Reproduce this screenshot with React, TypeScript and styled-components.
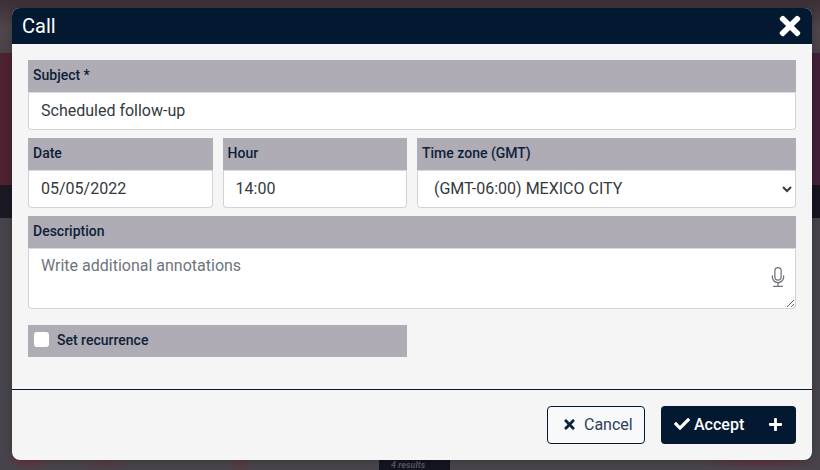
import React from "react";
import styled, { createGlobalStyle } from "styled-components";
import { FaTimes, FaCheck, FaPlus } from "react-icons/fa";
import { BsMic } from "react-icons/bs";

const Global = createGlobalStyle`
  html, body { margin: 0; padding: 0; height: 470px; overflow: hidden; }
  * { box-sizing: border-box; }
  body { font-family: Roboto, "Liberation Sans", sans-serif; }
`;

const Backdrop = styled.div`
  position: relative;
  width: 820px;
  height: 470px;
  padding: 8px 8px 10px 12px;
  background:
    radial-gradient(ellipse 26px 8px at 30px 462px, rgba(120, 40, 50, 0.55), transparent),
    radial-gradient(ellipse 30px 6px at 105px 464px, rgba(110, 40, 50, 0.4), transparent),
    radial-gradient(ellipse 14px 8px at 240px 464px, rgba(110, 40, 50, 0.45), transparent),
    radial-gradient(ellipse 70px 6px at 760px 463px, rgba(110, 35, 50, 0.55), transparent),
    linear-gradient(90deg, #4e2230 0%, #42203a 100%) 0 53px / 100% 132px no-repeat,
    linear-gradient(90deg, #1b1924, #16141f) 0 185px / 100% 33px no-repeat,
    linear-gradient(180deg, #3c2f37 0px, #443a40 14px, #4d464b 28px, #4a4248 53px) 0 0 / 100% 53px no-repeat,
    #47434a;
`;

const GhostResults = styled.div`
  position: absolute;
  left: 379px;
  top: 460px;
  width: 71px;
  height: 10px;
  padding-left: 12px;
  background: #14141f;
  color: #55535f;
  font-size: 9px;
  line-height: 10px;
  font-style: italic;
  font-weight: 700;
  white-space: nowrap;
  filter: blur(0.6px);
`;

const Modal = styled.section`
  position: relative;
  z-index: 1;
  width: 800px;
  height: 452px;
  display: flex;
  flex-direction: column;
  background: #f5f5f5;
  border-radius: 8px;
  overflow: hidden;
  box-shadow: 0 0 6px rgba(0, 0, 0, 0.25);
`;

const Header = styled.header`
  flex: none;
  height: 36px;
  padding: 0 10px;
  display: flex;
  align-items: center;
  justify-content: space-between;
  background: #031931;
  color: #fff;
`;

const Title = styled.h1`
  margin: 0;
  font-size: 20px;
  font-weight: 400;
  line-height: 36px;
`;

const CloseButton = styled.button`
  border: 0;
  padding: 0;
  width: 24px;
  height: 30px;
  display: flex;
  align-items: center;
  justify-content: center;
  background: none;
  color: #fff;
  font-size: 30px;
`;

const Body = styled.div`
  flex: none;
  height: 346px;
  padding: 16px 16px 0;
  display: flex;
  flex-direction: column;
  gap: 8px;
  border-bottom: 1px solid #031931;
`;

const Row = styled.div`
  display: grid;
  grid-template-columns: 184.6px 184.4px 379px;
  gap: 10px;
`;

const Field = styled.label`
  display: flex;
  flex-direction: column;
`;

const Caption = styled.span`
  height: 32px;
  padding: 0 5px 2px;
  display: flex;
  align-items: center;
  background: #afacb6;
  color: #0d2238;
  font-size: 14px;
  font-weight: 500;
`;

const controlStyles = `
  width: 100%;
  border: 1px solid #ced4da;
  border-top-color: #d8dbe0;
  border-radius: 0 0 4px 4px;
  background: #fff;
  color: #343a40;
  font-family: Roboto, "Liberation Sans", sans-serif;
  font-size: 16px;
  outline: none;
`;

const TextInput = styled.input`
  ${controlStyles}
  height: 38px;
  padding: 0 12px 2px;
`;

const Select = styled.select`
  ${controlStyles}
  height: 38px;
  padding: 0 8px 2px 12px;
`;

const TextAreaWrap = styled.div`
  position: relative;
  height: 61px;
`;

const TextArea = styled.textarea`
  ${controlStyles}
  display: block;
  height: 61px;
  padding: 7px 12px;
  resize: vertical;
  &::placeholder { color: #6c757d; opacity: 1; }
`;

const MicIcon = styled(BsMic)`
  position: absolute;
  right: 8px;
  top: 19px;
  width: 20px;
  height: 20px;
  color: #6f7377;
`;

const RecurrenceRow = styled.label`
  width: 379px;
  height: 32px;
  margin-top: 8px;
  padding: 0 6px 2px;
  display: flex;
  align-items: center;
  gap: 8px;
  background: #afacb6;
  color: #0d2238;
  font-size: 14px;
  font-weight: 500;
`;

const CheckBox = styled.span`
  width: 15px;
  height: 15px;
  border-radius: 3px;
  background: #fff;
  margin-top: -1px;
`;

const Footer = styled.footer`
  flex: 1;
  padding: 16px 16px 0;
  display: flex;
  justify-content: flex-end;
  align-items: flex-start;
  gap: 16px;
`;

const CancelButton = styled.button`
  width: 98px;
  height: 38px;
  padding: 0 0 2px 14px;
  display: flex;
  align-items: center;
  gap: 7px;
  border: 1px solid #031931;
  border-radius: 4px;
  background: #f7f9fb;
  color: #2f4055;
  font-family: inherit;
  font-size: 16px;
  svg { width: 15px; height: 15px; color: #0d2238; }
`;

const AcceptButton = styled.button`
  width: 135px;
  height: 38px;
  padding: 0 13px 2px;
  display: flex;
  align-items: center;
  gap: 4px;
  border: 0;
  border-radius: 4px;
  background: #031931;
  color: #fff;
  font-family: inherit;
  font-size: 16px;
  font-weight: 500;
  svg { width: 16px; height: 16px; }
`;

const AcceptPlus = styled.span`
  margin-left: auto;
  display: flex;
  svg { width: 15px; height: 15px; }
`;

export default function App() {
  return (
    <Backdrop>
      <Global />
      <GhostResults>4 results</GhostResults>
      <Modal>
        <Header>
          <Title>Call</Title>
          <CloseButton aria-label="Close"><FaTimes /></CloseButton>
        </Header>
        <Body>
          <Field>
            <Caption>Subject *</Caption>
            <TextInput defaultValue="Scheduled follow-up" />
          </Field>
          <Row>
            <Field>
              <Caption>Date</Caption>
              <TextInput defaultValue="05/05/2022" />
            </Field>
            <Field>
              <Caption>Hour</Caption>
              <TextInput defaultValue="14:00" />
            </Field>
            <Field>
              <Caption>Time zone (GMT)</Caption>
              <Select defaultValue="mx">
                <option value="mx">(GMT-06:00) MEXICO CITY</option>
              </Select>
            </Field>
          </Row>
          <Field>
            <Caption>Description</Caption>
            <TextAreaWrap>
              <TextArea placeholder="Write additional annotations" />
              <MicIcon />
            </TextAreaWrap>
          </Field>
          <RecurrenceRow>
            <CheckBox />
            Set recurrence
          </RecurrenceRow>
        </Body>
        <Footer>
          <CancelButton><FaTimes />Cancel</CancelButton>
          <AcceptButton>
            <FaCheck />Accept
            <AcceptPlus><FaPlus /></AcceptPlus>
          </AcceptButton>
        </Footer>
      </Modal>
    </Backdrop>
  );
}
